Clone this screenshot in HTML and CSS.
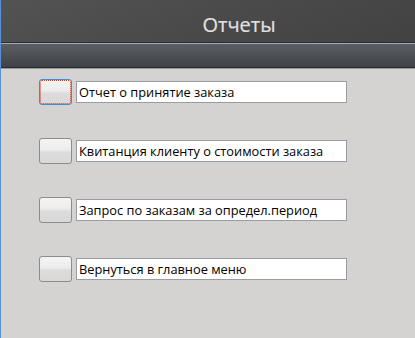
FILE: index.html
```html
<!DOCTYPE html>
<html lang="ru">
<head>
<meta charset="utf-8">
<title>Отчеты</title>
<link rel="stylesheet" href="styles.css">
</head>
<body>
<div class="window">
  <header class="header">
    <h1 class="title">Отчеты</h1>
  </header>
  <div class="band"></div>
  <main class="content">
    <div class="row">
      <button class="btn btn-focused" type="button"></button>
      <div class="field">Отчет о принятие заказа</div>
    </div>
    <div class="row">
      <button class="btn" type="button"></button>
      <div class="field">Квитанция клиенту о стоимости заказа</div>
    </div>
    <div class="row">
      <button class="btn" type="button"></button>
      <div class="field">Запрос по заказам за определ.период</div>
    </div>
    <div class="row">
      <button class="btn" type="button"></button>
      <div class="field">Вернуться в главное меню</div>
    </div>
  </main>
</div>
</body>
</html>
```
FILE: styles.css
```css
html, body {
  margin: 0;
  padding: 0;
  height: 100%;
}
body {
  background: #d4d3d1;
  font-family: "Open Sans", "Noto Sans", sans-serif;
}
.window {
  height: 100%;
  border-left: 1px solid #5b8fd8;
  display: flex;
  flex-direction: column;
  box-sizing: border-box;
}
.header {
  height: 42px;
  border-bottom: 1px solid #2a2e35;
  background: linear-gradient(160deg, #535353 0%, #4a4a4a 50%, #424242 100%);
  display: flex;
  justify-content: center;
  align-items: flex-start;
  padding-left: 62px;
  box-sizing: content-box;
}
.title {
  margin: 0;
  padding-top: 13px;
  font-family: "Open Sans", sans-serif;
  font-weight: 400;
  font-size: 20px;
  line-height: 24px;
  color: #e2e2e2;
  -webkit-text-stroke: 0.2px #e2e2e2;
}
.band {
  height: 23px;
  border-top: 1px solid #a0aab7;
  border-bottom: 1px solid #262a30;
  background: linear-gradient(180deg, #5b5e62 0%, #4c4f53 50%, #404347 100%);
}
.content {
  flex: 1;
  border-top: 1px solid #9a9a9a;
  padding: 10px 0 0 38px;
  display: flex;
  flex-direction: column;
  gap: 33px;
}
.row {
  display: flex;
  align-items: center;
  gap: 4px;
}
.btn {
  width: 33px;
  height: 26px;
  margin: 0;
  padding: 0;
  border: 1px solid #8c8c8c;
  border-radius: 3px;
  background: linear-gradient(180deg, #f4f4f4 0%, #ececec 45%, #dcdcdc 55%, #d8d8d8 100%);
  box-sizing: border-box;
}
.btn-focused {
  border-color: #3c8fd6;
  outline: 1px dotted #d04020;
  outline-offset: -2px;
}
.field {
  width: 271px;
  height: 22px;
  box-sizing: border-box;
  border: 1px solid #9a9ca4;
  background: #ffffff;
  padding: 0 0 0 2px;
  font-size: 12.8px;
  line-height: 20px;
  color: #000;
  white-space: nowrap;
  overflow: hidden;
}
```
